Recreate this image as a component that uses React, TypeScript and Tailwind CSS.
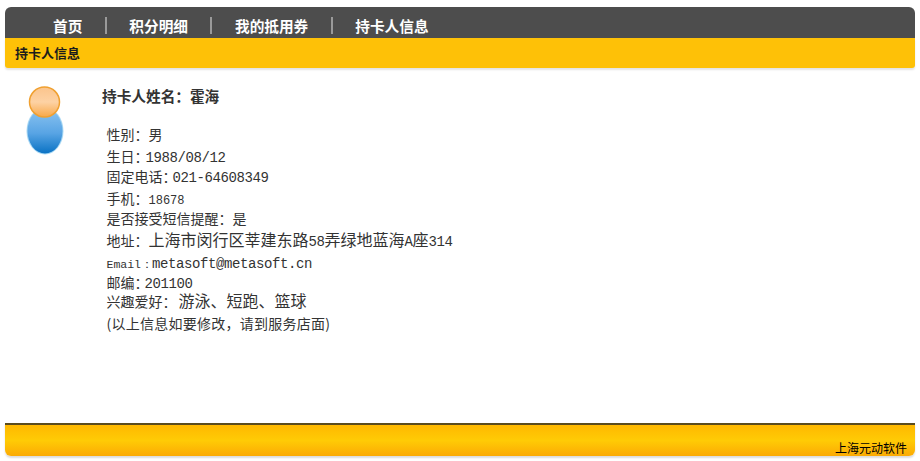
const CJK = '"Noto Sans CJK SC", "Liberation Sans", sans-serif'

const NAV = ['首页', '积分明细', '我的抵用券', '持卡人信息']

function Latin({ children, className = '' }: { children: React.ReactNode; className?: string }) {
  return <span className={`font-['Liberation_Mono'] ${className}`}>{children}</span>
}

function Avatar() {
  return (
    <svg width="50" height="76" viewBox="0 0 50 76" className="mt-[4px] shrink-0">
      <defs>
        <linearGradient id="body" x1="0" y1="0" x2="0" y2="1">
          <stop offset="0" stopColor="#8cc4f0" />
          <stop offset="0.55" stopColor="#58a4e4" />
          <stop offset="1" stopColor="#0a72c4" />
        </linearGradient>
        <linearGradient id="head" x1="0" y1="0" x2="0" y2="1">
          <stop offset="0" stopColor="#fbc48c" />
          <stop offset="0.5" stopColor="#fdd2a4" />
          <stop offset="1" stopColor="#f8a848" />
        </linearGradient>
      </defs>
      <ellipse cx="25" cy="48" rx="18.5" ry="23.5" fill="#a8d8f4" />
      <ellipse cx="25" cy="48" rx="17.5" ry="22.5" fill="url(#body)" />
      <circle cx="24.5" cy="19" r="15" fill="url(#head)" stroke="#f0a030" strokeWidth="1.5" />
    </svg>
  )
}

export default function App() {
  return (
    <div className="h-[461px] overflow-hidden bg-white px-[5px] pt-[7px] text-[#222]" style={{ fontFamily: CJK }}>
      <div className="flex h-[31px] items-center rounded-t-[6px] bg-[#4d4d4d] pt-[6px] pl-[48px] text-[14.67px] font-bold text-white">
        {NAV.map((item, i) => (
          <div key={item} className="flex items-center">
            {i > 0 && <span className="mx-[22.5px] h-[17px] w-[2px] bg-[#9a9a9a]" />}
            <span>{item}</span>
          </div>
        ))}
      </div>
      <div className="flex h-[30px] items-center rounded-b-[3px] bg-[#fec107] pl-[10px] text-[13px] font-bold text-[#1c1c1c] shadow-[0_2px_2px_#e4e4e4]">
        持卡人信息
      </div>

      <div className="flex h-[355px] pl-[15px] pt-[11px]">
        <Avatar />
        <div className="ml-[32px] whitespace-nowrap pt-[7px]">
          <div className="text-[14.67px] leading-[20px] font-bold text-[#333]">持卡人姓名：霍海</div>
          <div className="mt-[19px] pl-[4.5px] text-[14px] leading-[18px] text-[#333]">
            <div className="h-[18px]">性别：男</div>
            <div className="mt-[4px] h-[18px]">
              <span className="mr-[-3px]">生日：</span>
              <Latin className="tracking-[-0.4px]">1988/08/12</Latin>
            </div>
            <div className="mt-[2px] h-[18px]">
              <span className="mr-[-4px]">固定电话：</span>
              <Latin className="tracking-[-0.4px]">021-64608349</Latin>
            </div>
            <div className="mt-[4px] h-[18px]">
              手机：<Latin className="text-[12px]">18678</Latin>
            </div>
            <div className="mt-[2px] h-[18px]">是否接受短信提醒：是</div>
            <div className="mt-[3px] h-[18px]">
              地址：
              <span className="text-[16px]">
                上海市闵行区莘建东路<Latin className="text-[14px] tracking-[-0.4px]">58</Latin>弄绿地蓝海
                <Latin className="text-[14px] tracking-[-0.4px]">A</Latin>座
                <Latin className="text-[14px] tracking-[-0.4px]">314</Latin>
              </span>
            </div>
            <div className="mt-[5px] h-[18px]">
              <Latin className="mr-[-1px] text-[11.5px]">Email：</Latin>
              <Latin className="tracking-[-0.4px]">metasoft@metasoft.cn</Latin>
            </div>
            <div className="mt-[2px] h-[18px]">
              <span className="mr-[-4px]">邮编：</span>
              <Latin className="tracking-[-0.4px]">201100</Latin>
            </div>
            <div className="h-[18px]">
              <span className="mr-[2px]">兴趣爱好：</span>
              <span className="text-[16px]">游泳、短跑、篮球</span>
            </div>
            <div className="mt-[5px] h-[18px] tracking-[0.25px]">(以上信息如要修改，请到服务店面)</div>
          </div>
        </div>
      </div>

      <div className="flex h-[33px] items-end justify-end rounded-b-[6px] border-t-2 border-[#5b4c1e] bg-gradient-to-b from-[#ffb800] via-[#ffcb05] to-[#fbaa04] pr-[8px] text-[12px] leading-[17px] text-black shadow-[0_2px_2px_#dcdcdc]">
        上海元动软件
      </div>
    </div>
  )
}
